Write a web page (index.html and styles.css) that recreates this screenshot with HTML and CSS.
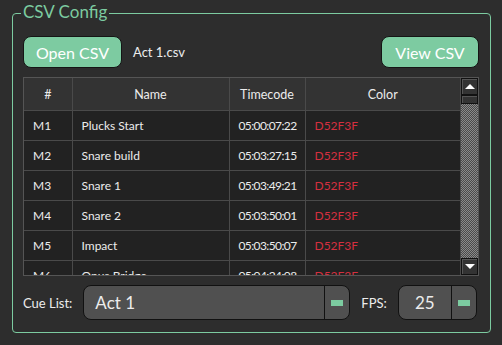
FILE: index.html
```html
<!DOCTYPE html>
<html lang="en">
<head>
    <meta charset="UTF-8">
    <title>CSV Config</title>
    <link rel="stylesheet" href="styles.css">
</head>
<body>
    <div class="group">
        <span class="group-title">CSV Config</span>

        <div class="top-row">
            <button class="btn">Open CSV</button>
            <span class="file-name">Act 1.csv</span>
            <button class="btn btn-view">View CSV</button>
        </div>

        <div class="table-box">
            <div class="table-area">
                <table>
                    <colgroup>
                        <col class="c-num">
                        <col class="c-name">
                        <col class="c-time">
                        <col>
                    </colgroup>
                    <thead>
                        <tr>
                            <th>#</th>
                            <th>Name</th>
                            <th>Timecode</th>
                            <th>Color</th>
                        </tr>
                    </thead>
                    <tbody>
                        <tr><td>M1</td><td>Plucks Start</td><td class="tc">05:00:07:22</td><td class="red">D52F3F</td></tr>
                        <tr><td>M2</td><td>Snare build</td><td class="tc">05:03:27:15</td><td class="red">D52F3F</td></tr>
                        <tr><td>M3</td><td>Snare 1</td><td class="tc">05:03:49:21</td><td class="red">D52F3F</td></tr>
                        <tr><td>M4</td><td>Snare 2</td><td class="tc">05:03:50:01</td><td class="red">D52F3F</td></tr>
                        <tr><td>M5</td><td>Impact</td><td class="tc">05:03:50:07</td><td class="red">D52F3F</td></tr>
                        <tr><td>M6</td><td>Onus Bridge</td><td class="tc">05:04:24:08</td><td class="red">D52F3F</td></tr>
                    </tbody>
                </table>
            </div>
            <div class="scrollbar">
                <div class="sb-btn"><span class="arrow-up"></span></div>
                <div class="sb-handle"></div>
                <div class="sb-track"></div>
                <div class="sb-btn"><span class="arrow-down"></span></div>
            </div>
        </div>

        <div class="bottom-row">
            <span class="label">Cue List:</span>
            <div class="combo combo-cue">
                <span class="combo-text">Act 1</span>
                <span class="combo-btn"><span class="mark"></span></span>
            </div>
            <span class="label label-fps">FPS:</span>
            <div class="combo combo-fps">
                <span class="combo-text center">25</span>
                <span class="combo-btn"><span class="mark"></span></span>
            </div>
        </div>
    </div>
</body>
</html>
```

FILE: styles.css
```css
body {
    margin: 0;
    background-color: #2d2d2d;
    font-family: Lato, "Open Sans", sans-serif;
    color: #ececec;
}
.group {
    position: relative;
    margin: 13px 11px 0 12px;
    height: 296px;
    border: 1px solid #7ccba0;
    border-radius: 4px;
    padding: 22px 11px 0 10px;
}
.group-title {
    position: absolute;
    top: -13px;
    left: 8px;
    padding: 0 2px;
    background-color: #2d2d2d;
    color: #7ccba0;
    font-size: 17px;
    line-height: 22px;
}
.top-row {
    display: flex;
    align-items: center;
    height: 32px;
}
.btn {
    height: 32px;
    width: 99px;
    background-color: #7dcba1;
    border: 1px solid #151515;
    border-radius: 8px;
    color: #ffffff;
    font-family: inherit;
    font-size: 16px;
    padding: 0;
}
.btn-view {
    margin-left: auto;
    width: 98px;
}
.file-name {
    margin-left: 11px;
    font-size: 13px;
}
.table-box {
    display: flex;
    margin-top: 9px;
    height: 197px;
    border: 1px solid #555555;
}
.table-area {
    flex: 1;
    overflow: hidden;
    background-color: #222222;
}
table {
    border-collapse: collapse;
    table-layout: fixed;
    width: 437px;
    font-size: 12px;
}
.c-num { width: 48px; }
.c-name { width: 157px; }
.c-time { width: 76px; }
th, td {
    border: 1px solid #4a4a4a;
    text-align: left;
    padding: 0 0 0 9px;
    height: 29px;
    font-weight: normal;
    white-space: nowrap;
    overflow: hidden;
}
th {
    background-color: #333333;
    text-align: center;
    height: 32px;
    padding: 0;
    border-top: none;
    font-size: 12.5px;
}
tr th:first-child, tr td:first-child {
    border-left: none;
}
td.tc {
    letter-spacing: -0.6px;
}
td.red {
    color: #d52f3f;
}
.scrollbar {
    width: 17px;
    display: flex;
    flex-direction: column;
    background-color: #333333;
}
.sb-btn {
    height: 15px;
    border: 1px solid #111111;
    box-shadow: inset 1px 1px 0 #555555;
    background-color: #333333;
    display: flex;
    align-items: center;
    justify-content: center;
}
.sb-handle {
    height: 7px;
    border: 1px solid #111111;
    box-shadow: inset 1px 1px 0 #555555;
    background-color: #333333;
}
.sb-track {
    flex: 1;
    background: repeating-conic-gradient(#8a8a8a 0 25%, #4a4a4a 0 50%) 0 0 / 2px 2px;
}
.arrow-up, .arrow-down {
    width: 0;
    height: 0;
    border-left: 5px solid transparent;
    border-right: 5px solid transparent;
}
.arrow-up { border-bottom: 5px solid #ffffff; }
.arrow-down { border-top: 5px solid #ffffff; }
.bottom-row {
    display: flex;
    align-items: center;
    margin-top: 9px;
    height: 35px;
}
.label {
    font-size: 13px;
}
.label-fps {
    margin-left: 11px;
}
.combo {
    display: flex;
    height: 33px;
    background-color: #505050;
    border: 1px solid #111111;
    border-radius: 8px;
}
.combo-cue {
    margin-left: 11px;
    width: 265px;
}
.combo-fps {
    margin-left: 11px;
    width: 77px;
}
.combo-text {
    flex: 1;
    padding-left: 11px;
    font-size: 17px;
    line-height: 33px;
}
.combo-text.center {
    padding-left: 0;
    text-align: center;
}
.combo-btn {
    width: 24px;
    border-left: 1px solid #111111;
    display: flex;
    align-items: center;
    justify-content: center;
}
.mark {
    width: 12px;
    height: 6px;
    background-color: #7ccba0;
}
```
